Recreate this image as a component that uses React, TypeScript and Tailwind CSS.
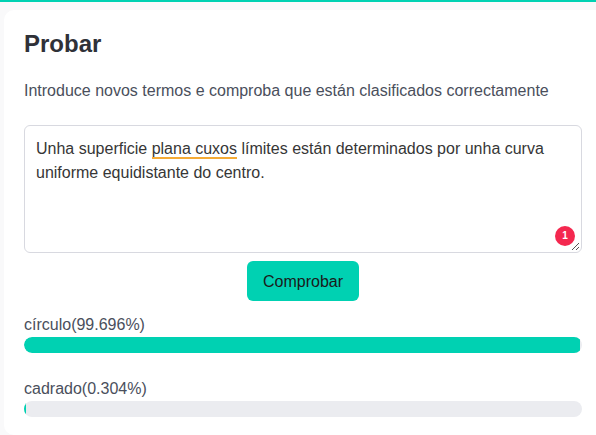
const font = "font-['Liberation_Sans',Arial,sans-serif]"

function Bar({ label, value }: { label: string; value: number }) {
  return (
    <div>
      <p className="text-base leading-6 text-[#4a4f5c]">{label}</p>
      <div className="h-4 overflow-hidden rounded-full bg-[#ebecf0]">
        <div className="h-full rounded-l-full rounded-r-sm bg-[#00d1b2]" style={{ width: `${value}%` }} />
      </div>
    </div>
  )
}

export default function App() {
  return (
    <div className={`${font} h-[435px] w-[596px] overflow-hidden border-t-2 border-[#00d1b2] bg-[#f9f9fa] pl-1 pt-2`}>
      <div className="h-[425px] rounded-l-[10px] bg-white pl-5 pr-[14px] pt-[18px]">
        <h2 className="text-2xl leading-8 font-bold text-[#2f3138]">Probar</h2>
        <p className="mt-[19px] text-base leading-6 text-[#4a4f5c]">
          Introduce novos termos e comproba que están clasificados correctamente
        </p>

        <div className="relative mt-[22px] h-[128px] rounded-md border border-[#d8d9e0] bg-white pt-[11px] pr-3 pl-[11px] text-base leading-6 text-[#363636]">
          <p>
            Unha superficie <span className="border-b-2 border-[#f5ab35]">plana cuxos</span> límites están determinados por unha curva uniforme equidistante do centro.
          </p>
          <span className="absolute right-[6px] bottom-[6px] flex h-5 w-5 items-center justify-center rounded-full bg-[#f4284f] text-[10px] font-bold text-white">
            1
          </span>
          <svg className="absolute right-[1px] bottom-[1px] h-[9px] w-[9px]" viewBox="0 0 9 9">
            <path d="M1 8 8 1M5 8 8 5" stroke="#555" strokeWidth="1" fill="none" />
          </svg>
        </div>

        <div className="mt-2 flex justify-center">
          <button className="h-10 w-[112px] rounded-md bg-[#00d1b2] pt-[1px] text-base text-[#1a1a1a]">Comprobar</button>
        </div>

        <div className="mt-3 flex flex-col gap-6">
          <Bar label="círculo(99.696%)" value={99.696} />
          <Bar label="cadrado(0.304%)" value={0.304} />
        </div>
      </div>
    </div>
  )
}
